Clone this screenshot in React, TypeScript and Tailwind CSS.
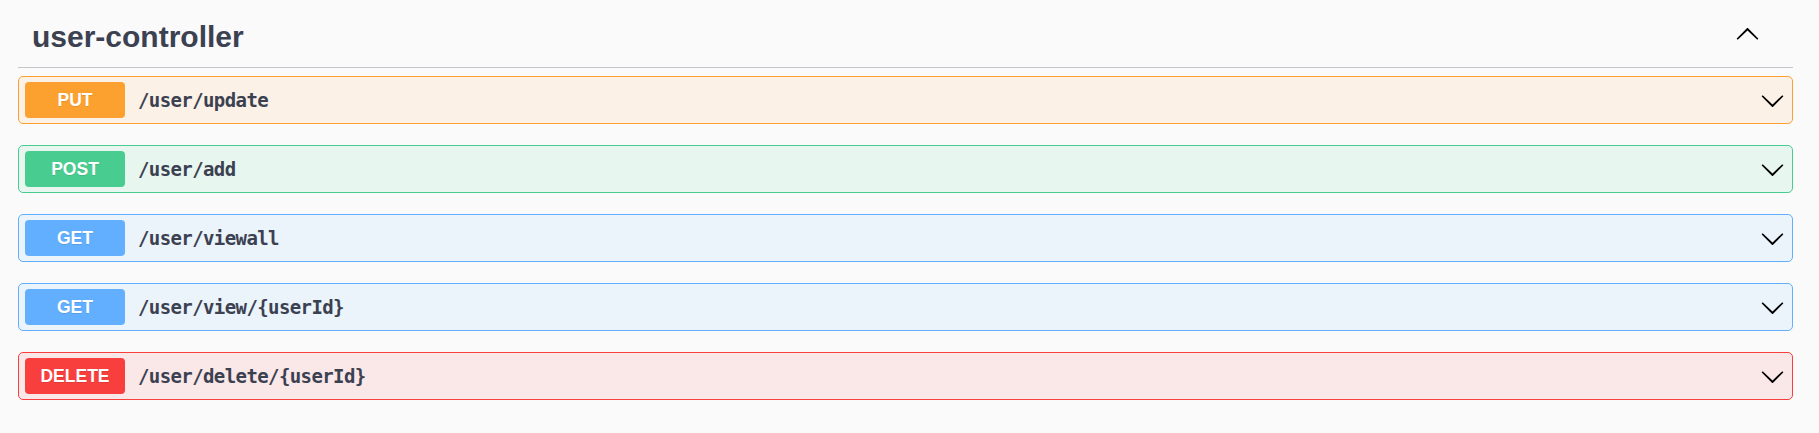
const OPS = [
  { method: "PUT", path: "/user/update", badge: "bg-[#fca130]", box: "bg-[#fcf1e6] border-[#fca130]" },
  { method: "POST", path: "/user/add", badge: "bg-[#49cc90]", box: "bg-[#e8f6f0] border-[#49cc90]" },
  { method: "GET", path: "/user/viewall", badge: "bg-[#61affe]", box: "bg-[#ebf3fb] border-[#61affe]" },
  { method: "GET", path: "/user/view/{userId}", badge: "bg-[#61affe]", box: "bg-[#ebf3fb] border-[#61affe]" },
  { method: "DELETE", path: "/user/delete/{userId}", badge: "bg-[#f93e3e]", box: "bg-[#fae7e7] border-[#f93e3e]" },
];

function Chevron({ up = false }: { up?: boolean }) {
  return (
    <svg width="25" height="25" viewBox="0 0 20 20" className={up ? "rotate-180" : ""}>
      <path
        fill="#000"
        d="M17.418 6.109c.272-.268.709-.268.979 0s.271.701 0 .969l-7.908 7.83c-.27.268-.707.268-.979 0l-7.908-7.83c-.27-.268-.27-.701 0-.969.271-.268.709-.268.979 0L10 13.25l7.418-7.141z"
      />
    </svg>
  );
}

export default function App() {
  return (
    <div className="min-h-screen bg-[#fafafa] pl-[18px] pr-[26px]">
      <div className="flex items-center border-b border-[#c4c5ca] pt-[19px] pb-[12px]">
        <h3 className="flex-1 pl-[14px] font-['Liberation_Sans',Arial,sans-serif] text-[30px] font-bold leading-[36px] text-[#3b4151]">
          user-controller
        </h3>
        <div className="mr-[33px] mb-[6px]">
          <Chevron up />
        </div>
      </div>

      <div className="mt-[8px] flex flex-col gap-[21px]">
        {OPS.map((op) => (
          <div
            key={op.path}
            className={`flex h-[48px] items-center rounded-[5px] border pl-[6px] pr-[7px] ${op.box}`}
          >
            <div
              className={`flex h-[36px] w-[100px] items-center justify-center rounded-[4px] font-['Liberation_Sans',Arial,sans-serif] text-[17.5px] font-bold text-white [text-shadow:0_1px_0_rgba(0,0,0,0.1)] ${op.badge}`}
            >
              {op.method}
            </div>
            <span className="ml-[13px] flex-1 font-['DejaVu_Sans_Mono',monospace] text-[19px] font-bold tracking-[-0.6px] text-[#3b4151]">
              {op.path}
            </span>
            <Chevron />
          </div>
        ))}
      </div>
    </div>
  );
}
